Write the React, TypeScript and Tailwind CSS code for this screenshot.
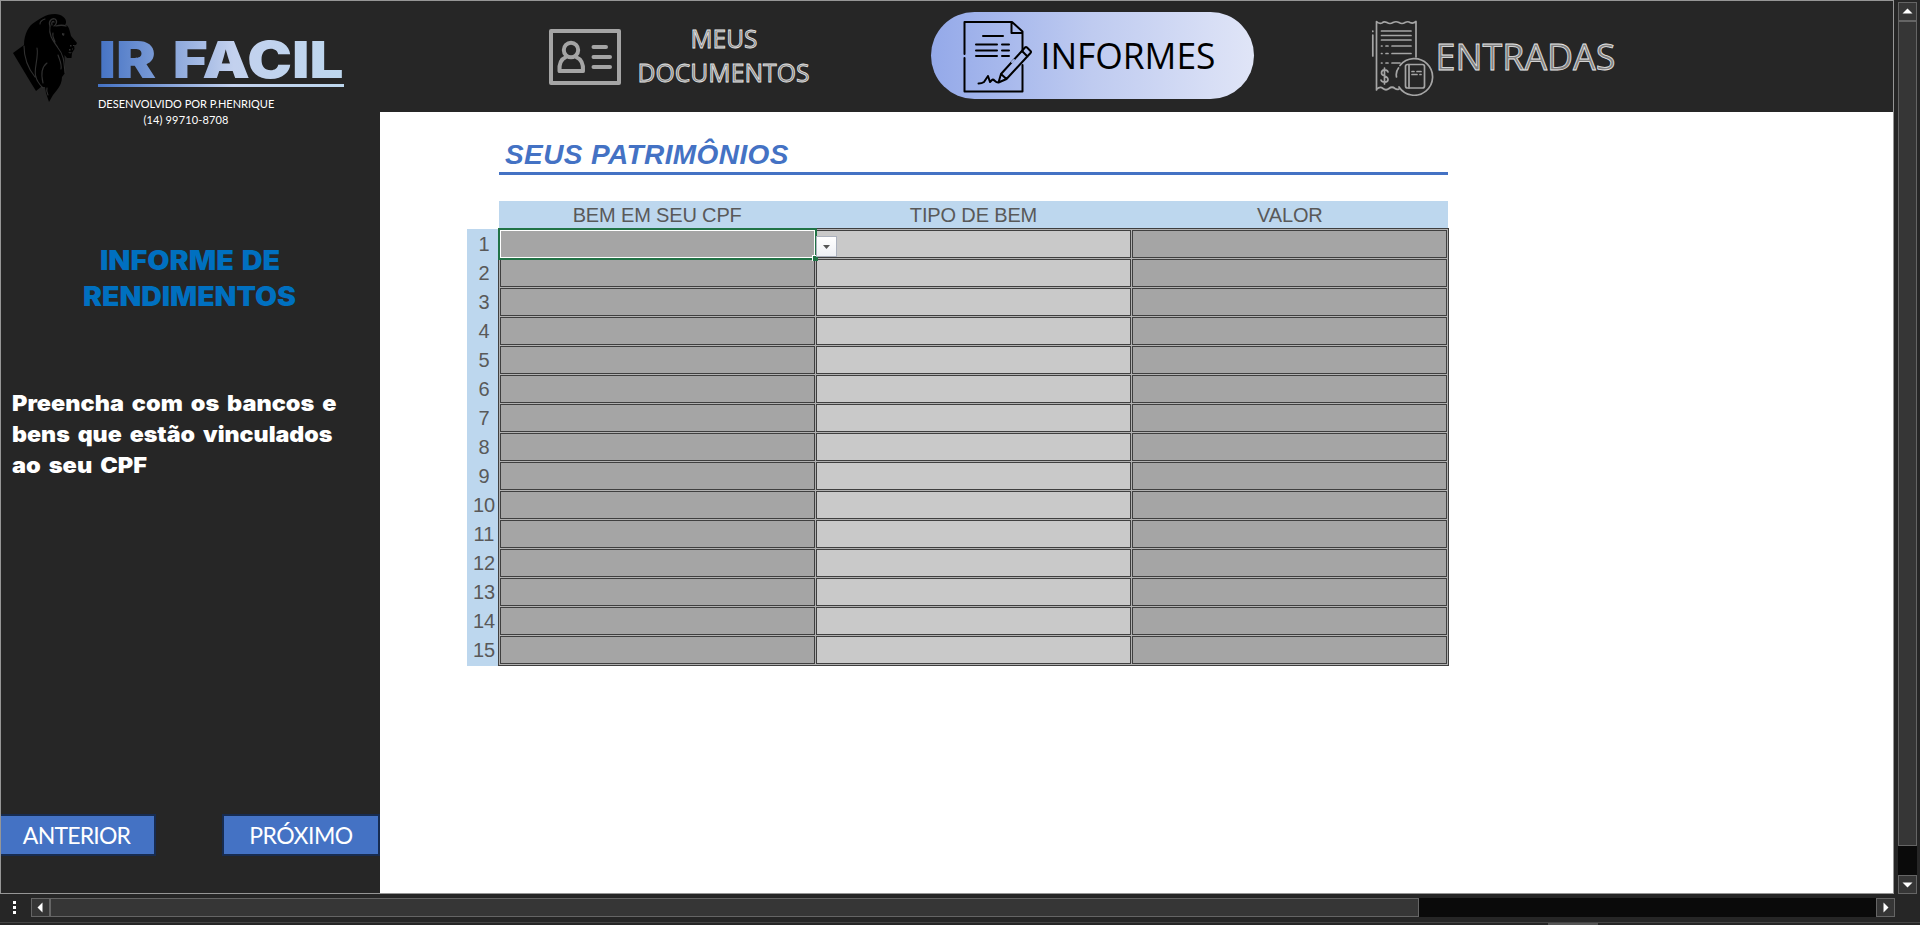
import React from "react";

const rows = Array.from({ length: 15 }, (_, i) => i + 1);

function Lion() {
  return (
    <svg className="block h-[90px] w-[66px] shrink-0" viewBox="0 0 66 90">
      <path
        fill="#000"
        d="M42 0C48 0 54 4 53 9L52 11C55 11 56 14 57 18L58 22L64 29L63 31L61 31L61.500 35L59 39L58.500 44L54 44L51.500 41L52 59L49 63C49 68 47 72 44 76L40 81L36 88L33 79L32 73L28 73L23 77L18 69L0 39L11 31C11 20 16 11 22 8C27 5 32 0 42 0Z"
      />
      <g fill="none" stroke="#303030" strokeWidth="1.100" strokeLinecap="round">
        <path d="M11 32C11 48 18 58 22 63M24 34C26 44 20 56 23 63C24 68 27 71 30 74M27 10C27 7 29 6 32 5" />
        <path d="M37 12C35 22 42 29 45 34C52 42 51 52 52 59M40 19C39 22 41 25 42 28M34 49C30 52 27 57 30 69M45 41C47 47 49 50 48 55M34 74C33 77 34 79 35 81" />
        <path strokeWidth="1.300" d="M37 12C35 7 39 4 42 5C45 7 43 11 41 12M39 11C38 8 40 7 41 8M43 12C46 11 51 11 53 12" />
      </g>
      <path fill="#303030" d="M49 19l2.500 .5-.5 2.500-2-1zM57 31h1.500v1.500H57zM60 31h1v1h-1zM56 35h1.500v1.500H56zM59 34.500h1v1h-1zM55 38l4 .5-2 1z" />
    </svg>
  );
}

function IdCard() {
  return (
    <svg className="block h-[56px] w-[72px]" viewBox="0 0 72 56" fill="none" stroke="#a5a5a5" strokeWidth="4" strokeLinecap="round" strokeLinejoin="round">
      <rect x="2" y="2" width="68" height="52" />
      <circle cx="22" cy="21" r="7.200" />
      <path d="M17 28C12 30 10 35 10.500 42H34C34.500 35 32 30 27 28M44.500 18H57M44.500 28H61M44.500 38H61" />
    </svg>
  );
}

function Contract() {
  return (
    <svg className="block h-[72px] w-[70px]" viewBox="0 0 70 72" fill="none" stroke="#000" strokeWidth="2" strokeLinecap="round" strokeLinejoin="round">
      <path d="M1.500 33V1H49L59.500 10.500V30M1.500 37V70.500H59.500V44M48.500 1V12H59.500M20 15H40M13 23.500H34M39 23.500H46M13 29.500H34M39 29.500H46M13 35H34M39 35H46" />
      <path d="M35.500 61.500L38 53L62 26.500Q63 25.500 64 26.500L67.500 30Q68.500 31 67.500 32L43.500 58L35.500 61.500M38 53L43.500 58M59 30L64.500 35.500M35.500 61.500C32 62 31 57 29 59L27 61L25 55L21 61Q19 62.500 15.500 62.500" />
      <path stroke="#a7b9ed" d="M49 41L51 39" />
    </svg>
  );
}

function Receipt() {
  return (
    <svg className="block h-[76px] w-[63px]" viewBox="0 0 63 76" fill="none" stroke="#a5a5a5" strokeWidth="1.700" strokeLinecap="round" strokeLinejoin="round">
      <path d="M5.500 70V1.500Q8 4 11 3Q13 1 16 2.500Q19 4.500 22 2.500Q25 1 28 2.500Q31 4.500 34 2.500Q37 1 39 2.500Q42 4 45 1.500V37M5.500 69.500Q9 66 12 68.500Q15 71 18 68.500Q21 66 24 68.500Q26 70 28 69" />
      <path d="M1.800 15V36M1.800 11V11.500M10.500 11H40M10.500 15.500H40M10.500 20H40M10.500 26H11M15 26H17M21 26H40M10.500 33.500H11M15 33.500H17M21 33.500H40M10.500 43H11M15 43H17M21 43H29" />
      <path d="M17 52C16 49 10.500 49 10.500 53C10.500 57 17 55 17 59.500C17 63 11 63 10 60M13.500 48V64" />
      <path d="M28 67A18.300 18.300 0 1 0 29 45.500M27.500 48Q24.500 52 25.500 57" />
      <rect x="34.500" y="44.500" width="19" height="23.500" rx="2" />
      <path d="M38 44.500V68M41 51.500H43M46 51.500H50M41 54.500H46M49 54.500H50" />
    </svg>
  );
}

function Arrow({ dir }: { dir: "up" | "down" | "left" | "right" }) {
  const d = {
    up: "M4 11L9 6L14 11Z",
    down: "M4 7H14L9 12Z",
    left: "M11 4V14L6 9Z",
    right: "M7 4V14L12 9Z",
  }[dir];
  return (
    <svg className="block size-[19px] shrink-0 border border-[#656565] bg-[#363636]" viewBox="0 0 17 17">
      <path fill="#fff" d={d} transform="translate(-.5 -.5)" />
    </svg>
  );
}

function Sidebar() {
  return (
    <aside className="flex h-[892px] w-[379px] flex-col bg-[#262626]">
      <div className="flex h-[140px] pt-[13px] pl-3">
        <Lion />
        <div className="pt-[9px] pl-[19px]">
          <svg className="block h-[72px] w-[260px]" viewBox="0 -8 260 72">
            <defs>
              <linearGradient id="brand" gradientUnits="userSpaceOnUse" x1="0" x2="246" y1="0" y2="0">
                <stop offset="0" stopColor="#4472c4" />
                <stop offset=".55" stopColor="#c3d1ee" />
                <stop offset="1" stopColor="#bdd7ee" />
              </linearGradient>
            </defs>
            <text x="0.500" y="47" textLength="245" lengthAdjust="spacingAndGlyphs" fill="url(#brand)" className="font-[Inter,sans-serif] text-[51px] font-black [word-spacing:4px]">IR FACIL</text>
            <rect x="0" y="53" width="246" height="3" fill="url(#brand)" />
          </svg>
          <div className="w-[176px] pt-px text-center font-[Lato,sans-serif] text-[11px] leading-4 whitespace-nowrap text-white">
            <div>DESENVOLVIDO POR P.HENRIQUE</div>
            <div className="tracking-[0.15px]">(14) 99710-8708</div>
          </div>
        </div>
      </div>
      <svg className="mt-[96px] block h-[84px] w-[379px] shrink-0" viewBox="0 0 379 84">
        <g fill="#0070c0" className="font-[Inter,sans-serif] text-[26.500px] font-black [word-spacing:2px]">
          <text x="99" y="33" textLength="180" lengthAdjust="spacingAndGlyphs">INFORME DE</text>
          <text x="82" y="69" textLength="213" lengthAdjust="spacingAndGlyphs">RENDIMENTOS</text>
        </g>
      </svg>
      <svg className="mt-[62px] block h-[100px] w-[379px] shrink-0" viewBox="0 0 379 100">
        <g fill="#fff" className="font-[Inter,sans-serif] text-[21.500px] font-black [word-spacing:3px]">
          <text x="11" y="28" textLength="324.500" lengthAdjust="spacingAndGlyphs">Preencha com os bancos e</text>
          <text x="11" y="59" textLength="320.500" lengthAdjust="spacingAndGlyphs">bens que estão vinculados</text>
          <text x="11" y="90" textLength="135" lengthAdjust="spacingAndGlyphs">ao seu CPF</text>
        </g>
      </svg>
      <div className="mt-[331px] flex justify-between font-[Lato,sans-serif] text-[23px] text-white">
        <button className="h-[42px] w-[155px] border-2 border-l-0 border-[#172c51] bg-[#4472c4] pr-[2px] leading-[36px] tracking-[-0.8px]">ANTERIOR</button>
        <button className="h-[42px] w-[158px] border-2 border-[#172c51] bg-[#4472c4] leading-[36px] tracking-[-0.5px]">PRÓXIMO</button>
      </div>
    </aside>
  );
}

function Header() {
  const outlined = "fill-[#808080] stroke-[#e6e6e6] stroke-[0.8px] font-['Open_Sans',sans-serif]";
  return (
    <header className="flex h-[111px] items-start bg-[#262626] pl-[169px]">
      <div className="flex w-[382px] pt-[28px]">
        <IdCard />
        <svg className="-mt-2 ml-4 block h-[72px] w-[176px]" viewBox="0 0 176 72">
          <g className={outlined} fontSize="25">
            <text x="53.500" y="26.500" textLength="67" lengthAdjust="spacingAndGlyphs">MEUS</text>
            <text x="0.500" y="60.500" textLength="172" lengthAdjust="spacingAndGlyphs">DOCUMENTOS</text>
          </g>
        </svg>
      </div>
      <div className="mt-[11px] flex h-[87px] w-[323px] rounded-[44px] bg-linear-to-r from-[#94a9e9] via-[#bfcbf0] to-[#e0e5f7] pt-[9px] pl-[32px]">
        <Contract />
        <svg className="ml-[5px] block h-[72px] w-[190px]" viewBox="0 0 190 72">
          <text x="2.500" y="48" textLength="175" lengthAdjust="spacingAndGlyphs" fontSize="36" className="font-['Open_Sans',sans-serif]">INFORMES</text>
        </svg>
      </div>
      <div className="mt-[19px] ml-[117px] flex">
        <Receipt />
        <svg className="block h-[72px] w-[186px]" viewBox="0 0 186 72">
          <text x="1.500" y="49.500" textLength="180" lengthAdjust="spacingAndGlyphs" fontSize="36" className={outlined}>ENTRADAS</text>
        </svg>
      </div>
    </header>
  );
}

function AssetTable() {
  return (
    <section className="ml-[87px] w-[982px] pt-[23px] font-['Liberation_Sans',sans-serif]">
      <div className="ml-8 flex h-[40px] w-[949px] items-center border-b-3 border-[#4472c4] pl-[6px] text-[28px] font-bold tracking-[0.4px] text-[#4472c4] italic">
        <span className="pt-[3px]">SEUS PATRIMÔNIOS</span>
      </div>
      <div className="mt-[26px] ml-8 grid h-[27px] w-[949px] grid-cols-3 bg-[#bdd7ee] pt-px text-center text-[20px] leading-[27px] tracking-[-0.15px] text-[#595959]">
        <span>BEM EM SEU CPF</span>
        <span>TIPO DE BEM</span>
        <span>VALOR</span>
      </div>
      <div className="flex">
        <div className="mt-px w-[31px] bg-[#bdd7ee] text-center text-[20px] leading-[29px] text-[#595959]">
          {rows.map((n) => (
            <div key={n} className="h-[29px] pt-px pl-[3px]">{n}</div>
          ))}
        </div>
        <div className="relative grid w-[951px] grid-cols-3 gap-px border border-[#3f3f3f] bg-[#b0b0b0] p-px">
          {rows.map((n) => (
            <React.Fragment key={n}>
              <div className="h-7 border border-[#3f3f3f] bg-[#a5a5a5]" />
              <div className="h-7 border border-[#3f3f3f] bg-[#c9c9c9]" />
              <div className="h-7 border border-[#3f3f3f] bg-[#a5a5a5]" />
            </React.Fragment>
          ))}
          <div className="absolute -top-px -left-px h-8 w-[319px] border-2 border-[#217346]">
            <div className="h-full border border-white" />
            <div className="absolute -right-[3px] -bottom-[3px] size-[6px] border-t border-l border-white bg-[#217346]" />
          </div>
          <div className="absolute top-[7px] left-[317px] flex h-[21px] w-[21px] items-center justify-center border border-[#abb1bd] bg-linear-to-b from-white to-[#eef0f4]">
            <svg className="block h-1 w-[7px]" viewBox="0 0 7 4">
              <path fill="#555" d="M0 0H7L3.500 4Z" />
            </svg>
          </div>
        </div>
      </div>
    </section>
  );
}

export default function App() {
  return (
    <div className="flex h-[925px] w-[1920px] flex-col overflow-hidden bg-[#262626]">
      <div className="flex h-[894px]">
        <div className="flex h-[894px] w-[1894px] border border-[#969696] bg-white">
          <Sidebar />
          <main className="min-w-0 flex-1">
            <Header />
            <AssetTable />
          </main>
        </div>
        <div className="ml-[4px] flex h-[894px] w-[19px] flex-col pt-[2px]">
          <Arrow dir="up" />
          <div className="-mt-px h-[826px] shrink-0 border border-t-2 border-[#656565] bg-[#363636]" />
          <div className="flex-1 bg-[#0a0a0a]" />
          <Arrow dir="down" />
        </div>
      </div>
      <div className="flex h-[28px] items-start pt-[4px]">
        <div className="mt-[3px] ml-[13px] flex w-[18px] shrink-0 flex-col gap-[2px]">
          <i className="size-[3px] bg-white" />
          <i className="size-[3px] bg-white" />
          <i className="size-[3px] bg-white" />
        </div>
        <Arrow dir="left" />
        <div className="-ml-px h-[19px] w-[1370px] shrink-0 border border-l-2 border-[#656565] bg-[#363636]" />
        <div className="h-[19px] w-[457px] shrink-0 bg-[#0a0a0a]" />
        <Arrow dir="right" />
      </div>
      <div className="flex h-[3px] border-t border-[#444] pl-[1548px]">
        <div className="h-[2px] w-[50px] bg-[#555]" />
      </div>
    </div>
  );
}
